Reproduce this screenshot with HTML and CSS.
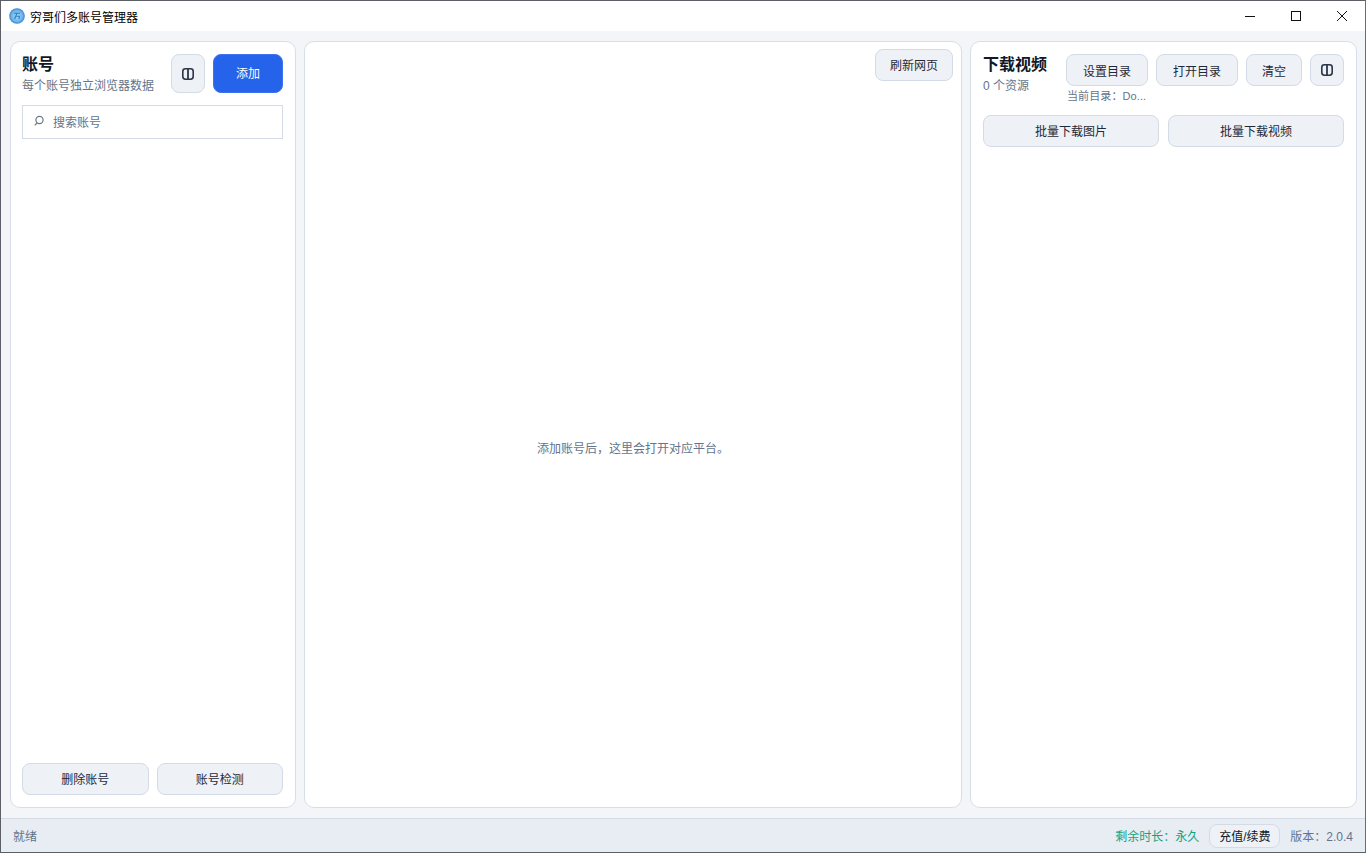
FILE: index.html
```html
<!DOCTYPE html>
<html lang="zh-CN">
<head>
  <meta charset="UTF-8">
  <title>穷哥们多账号管理器</title>
  <link rel="stylesheet" href="styles.css">
</head>
<body>
  <div class="window">
    <header class="titlebar">
      <svg class="app-icon" width="16" height="16" viewBox="0 0 16 16">
        <defs>
          <radialGradient id="globe" cx="50%" cy="50%" r="50%">
            <stop offset="0" stop-color="#a9d8f5"/>
            <stop offset="0.7" stop-color="#6fb6ea"/>
            <stop offset="1" stop-color="#3583cf"/>
          </radialGradient>
        </defs>
        <circle cx="8" cy="8" r="7.8" fill="url(#globe)"/>
        <path d="M5 5.2h6M8 5.2L5.6 11M7 8.3h3.4L10 11" fill="none" stroke="#2f7fc4" stroke-width="1.1"/>
      </svg>
      <span class="app-title">穷哥们多账号管理器</span>
      <div class="win-controls">
        <button class="win-btn">
          <svg width="12" height="12" viewBox="0 0 12 12"><path d="M1 6.5h10" stroke="#111" fill="none"/></svg>
        </button>
        <button class="win-btn">
          <svg width="12" height="12" viewBox="0 0 12 12"><rect x="1.5" y="1.5" width="9" height="9" stroke="#111" fill="none"/></svg>
        </button>
        <button class="win-btn">
          <svg width="12" height="12" viewBox="0 0 12 12"><path d="M1 1l10 10M11 1L1 11" stroke="#111" fill="none"/></svg>
        </button>
      </div>
    </header>

    <main class="content">
      <section class="panel accounts">
        <div class="panel-head">
          <div class="heading">
            <h2>账号</h2>
            <p class="muted">每个账号独立浏览器数据</p>
          </div>
          <button class="btn icon-btn tall">
            <svg width="14" height="14" viewBox="0 0 14 14"><rect x="1.8" y="1.8" width="10.4" height="10.4" rx="2.6" fill="none" stroke="#2b3648" stroke-width="1.6"/><path d="M7 2v10" stroke="#2b3648" stroke-width="1.8"/></svg>
          </button>
          <button class="btn primary">添加</button>
        </div>
        <label class="search">
          <svg width="14" height="14" viewBox="0 0 14 14"><circle cx="7.5" cy="6" r="3.6" fill="none" stroke="#6b7688" stroke-width="1.2"/><path d="M5 9L2.8 11.4" stroke="#9a7a5c" stroke-width="1.3"/></svg>
          <span>搜索账号</span>
        </label>
        <div class="spacer"></div>
        <div class="row-2">
          <button class="btn wide">删除账号</button>
          <button class="btn wide">账号检测</button>
        </div>
      </section>

      <section class="panel browser">
        <div class="browser-bar">
          <button class="btn refresh">刷新网页</button>
        </div>
        <p class="empty">添加账号后，这里会打开对应平台。</p>
      </section>

      <section class="panel downloads">
        <div class="dl-head">
          <div class="heading dl-title">
            <h2>下载视频</h2>
            <p class="muted">0 个资源</p>
          </div>
          <div class="dl-actions">
            <div class="dl-buttons">
              <button class="btn set-dir">设置目录</button>
              <button class="btn set-dir">打开目录</button>
              <button class="btn clear">清空</button>
              <button class="btn icon-btn">
                <svg width="14" height="14" viewBox="0 0 14 14"><rect x="1.8" y="1.8" width="10.4" height="10.4" rx="2.6" fill="none" stroke="#2b3648" stroke-width="1.6"/><path d="M7 2v10" stroke="#2b3648" stroke-width="1.8"/></svg>
              </button>
            </div>
            <div class="cur-dir">当前目录：Do...</div>
          </div>
        </div>
        <div class="row-2 batch">
          <button class="btn wide">批量下载图片</button>
          <button class="btn wide">批量下载视频</button>
        </div>
      </section>
    </main>

    <footer class="statusbar">
      <span class="status-text">就绪</span>
      <span class="remain">剩余时长：永久</span>
      <button class="btn renew">充值/续费</button>
      <span class="status-text">版本：2.0.4</span>
    </footer>
  </div>
</body>
</html>
```

FILE: styles.css
```css
* {
  box-sizing: border-box;
}

body {
  margin: 0;
  overflow: hidden;
  font-family: "Liberation Sans", "Noto Sans CJK SC", sans-serif;
  font-size: 12px;
  color: #1f2937;
}

.window {
  width: 1366px;
  height: 853px;
  display: flex;
  flex-direction: column;
  border: 1px solid #5c6066;
  border-right-color: #6a6e74;
  background: #f3f5f8;
}

.titlebar {
  height: 30px;
  flex: none;
  display: flex;
  align-items: center;
  padding-left: 8px;
  background: #ffffff;
}

.app-icon {
  margin-right: 5px;
}

.app-title {
  color: #000000;
  font-size: 12px;
}

.win-controls {
  margin-left: auto;
  display: flex;
}

.win-btn {
  width: 46px;
  height: 30px;
  padding: 0;
  border: 0;
  background: transparent;
  display: flex;
  align-items: center;
  justify-content: center;
}

.content {
  flex: 1;
  min-height: 0;
  display: flex;
  gap: 8px;
  padding: 10px 8px 10px 9px;
}

.panel {
  background: #ffffff;
  border: 1px solid #d8dee8;
  border-radius: 10px;
}

.accounts {
  width: 286px;
  padding: 12px 12px 12px 11px;
  display: flex;
  flex-direction: column;
}

.browser {
  width: 658px;
  display: flex;
  flex-direction: column;
}

.downloads {
  width: 387px;
  padding: 12px;
}

.panel-head {
  display: flex;
  align-items: flex-start;
  gap: 8px;
  height: 39px;
}

.heading {
  flex: 1;
  min-width: 0;
  padding-top: 1px;
}

.heading h2 {
  margin: 0;
  font-size: 16px;
  line-height: 20px;
  font-weight: 600;
  color: #111827;
}

.muted {
  margin: 3px 0 0;
  font-size: 12px;
  line-height: 16px;
  color: #64748b;
}

.btn {
  height: 32px;
  padding: 0 0 2px;
  border: 1px solid #d3dbe7;
  border-radius: 8px;
  background: #eef1f6;
  color: #1f2937;
  font-family: inherit;
  font-size: 12px;
  display: flex;
  align-items: center;
  justify-content: center;
}

.icon-btn {
  width: 34px;
  padding: 0;
}

.tall {
  height: 39px;
}

.primary {
  width: 70px;
  height: 39px;
  background: #2563eb;
  border-color: #3b74ee;
  color: #ffffff;
}

.search {
  height: 34px;
  margin-top: 12px;
  padding: 0 0 2px 9px;
  display: flex;
  align-items: center;
  gap: 7px;
  border: 1px solid #d5dbe6;
  color: #64748b;
}

.spacer {
  flex: 1;
}

.row-2 {
  display: flex;
  gap: 8px;
}

.wide {
  flex: 1;
}

.browser-bar {
  height: 45px;
  flex: none;
  display: flex;
  justify-content: flex-end;
  padding: 7px 8px 0 0;
}

.refresh {
  width: 78px;
}

.empty {
  flex: 1;
  margin: 0;
  display: flex;
  align-items: center;
  justify-content: center;
  color: #64748b;
}

.dl-head {
  display: flex;
  height: 49px;
}

.dl-title {
  flex: none;
  width: 83px;
}

.dl-actions {
  flex: 1;
}

.dl-buttons {
  display: flex;
  gap: 8px;
}

.dl-buttons .btn {
  padding-bottom: 0;
}

.set-dir {
  width: 82px;
}

.clear {
  width: 56px;
}

.cur-dir {
  margin-top: 3px;
  padding-left: 1px;
  font-size: 11px;
  line-height: 15px;
  letter-spacing: 0.1px;
  color: #64748b;
}

.batch {
  margin-top: 12px;
  gap: 9px;
}

.statusbar {
  height: 34px;
  flex: none;
  display: flex;
  align-items: center;
  gap: 10px;
  padding: 0 12px;
  background: #e8edf4;
  border-top: 1px solid #d5dbe6;
}

.status-text {
  color: #64748b;
}

.remain {
  margin-left: auto;
  color: #10a37f;
}

.renew {
  width: 71px;
  height: 24px;
  padding: 0;
  color: #111827;
}
```
